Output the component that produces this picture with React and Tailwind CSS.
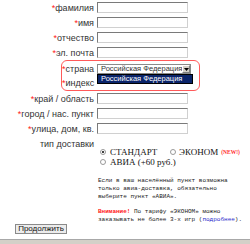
export default function App() {
  const lbl = "text-[9px] leading-[10px] text-[#333] text-right pr-[3px] whitespace-nowrap";
  const inp = "w-[91px] h-[11px] bg-white border border-t-[#7a7a7a] border-l-[#7a7a7a] border-r-[#d0d0d0] border-b-[#d0d0d0]";
  const Star = () => <span className="text-[#ff2020]">*</span>;
  const Row = ({ label, req = true, w = "w-[97px]", h = "h-[15px]", children }) => (
    <div className={`flex items-center ${h}`}>
      <div className={`${w} ${lbl}`}>
        {req && <Star />}
        {label}
      </div>
      {children}
    </div>
  );
  return (
    <div className="w-[250px] h-[244px] bg-white overflow-hidden font-['Liberation_Sans',Arial,sans-serif] flex flex-col">
      <Row label="фамилия"><div className={inp} /></Row>
      <Row label="имя"><div className={inp} /></Row>
      <Row label="отчество"><div className={inp} /></Row>
      <Row label="эл. почта"><div className={inp} /></Row>

      <div className="ml-[61px] w-[139px] h-[31px] border border-[#ff5a5a] rounded-[6px] pt-[1px]">
        <Row label="страна" w="w-[35px]" h="h-[14px]">
          <div className="relative w-[94px] h-[10px] border border-[#8a8a8a] bg-white flex items-center">
            <span className="text-[7.5px] leading-[8px] text-[#333] pl-[3px] flex-1 whitespace-nowrap overflow-hidden">Российская Федерация</span>
            <div className="w-[8px] h-[8px] bg-[#d4d0c8] border border-t-white border-l-white border-r-[#808080] border-b-[#808080] flex items-center justify-center">
              <svg width="5" height="3" viewBox="0 0 5 3"><path d="M0 0h5L2.5 3z" fill="#000" /></svg>
            </div>
            <div className="absolute left-[-1px] top-[9px] w-[96px] h-[10px] bg-[#0a246a] border border-black flex items-center">
              <span className="text-[7.5px] leading-[8px] text-white pl-[3px] whitespace-nowrap">Российская Федерация</span>
            </div>
          </div>
        </Row>
        <Row label="индекс" w="w-[35px]" h="h-[14px]">
          <div className="w-[91px] h-[10px]" />
        </Row>
      </div>

      <Row label="край / область"><div className={inp} /></Row>
      <Row label="город / нас. пункт"><div className={inp} /></Row>
      <Row label="улица, дом, кв."><div className={inp} /></Row>

      <div className="h-[11px] flex">
        <div className={`w-[97px] ${lbl} pt-[3px]`}>тип доставки</div>
      </div>

      <div className="pl-[100px] font-['Liberation_Serif','Times_New_Roman',serif] text-[9px] text-[#111]">
        <div className="h-[10px] flex items-center">
          <span className="w-[6px] h-[6px] rounded-full border border-[#999] bg-white flex items-center justify-center mr-[4px]">
            <span className="w-[2px] h-[2px] rounded-full bg-black" />
          </span>
          <span className="w-[60px] leading-[10px]">СТАНДАРТ</span>
          <span className="w-[6px] h-[6px] rounded-full border border-[#999] bg-white mr-[3px]" />
          <span className="leading-[10px]">ЭКОНОМ</span>
          <span className="ml-[3px] text-[5.5px] leading-[8px] text-[#ff2a2a] font-bold">(NEW!)</span>
        </div>
        <div className="h-[10px] flex items-center">
          <span className="w-[6px] h-[6px] rounded-full border border-[#999] bg-white mr-[4px]" />
          <span className="leading-[10px]">АВИА (+60 руб.)</span>
        </div>
      </div>

      <div className="ml-[98px] mt-[10px] font-['Liberation_Mono','Courier_New',monospace] text-[6px] leading-[8px] text-[#222] whitespace-nowrap">
        <p>Если в ваш населённый пункт возможна<br />только авиа-доставка, обязательно<br />выберите пункт «АВИА».</p>
        <p className="mt-[7px]">
          <span className="text-[#ff2020] font-bold">Внимание!</span> По тарифу «ЭКОНОМ» можно<br />
          заказывать не более 3-х игр (<span className="text-[#2a2acc]">подробнее</span>).
        </p>
      </div>

      <div className="ml-[15px] w-[52px] h-[10px] border border-[#8a8a8a] bg-[#ececec] flex items-center justify-center text-[8px] leading-[8px] text-[#111]">
        Продолжить
      </div>

      <div className="mt-[5px] h-[5px] bg-[#d4d0c8] border-t border-[#a8a8a8]" />
    </div>
  );
}
